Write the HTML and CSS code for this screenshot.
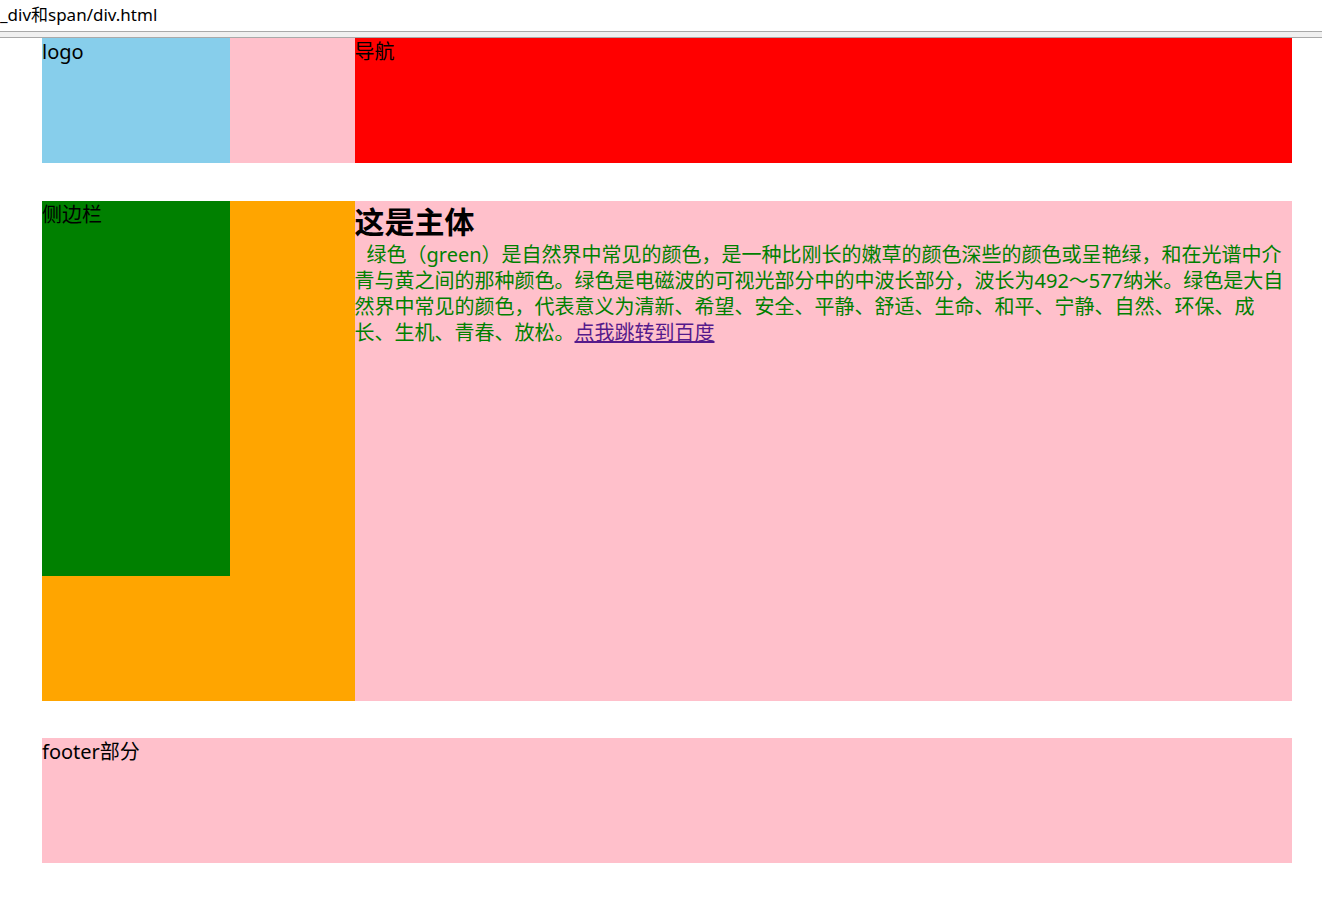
FILE: index.html
```html
<!DOCTYPE html>
<html lang="zh">
<head>
<meta charset="utf-8">
<title>div</title>
<link rel="stylesheet" href="styles.css">
</head>
<body>
<div class="addr">_div和span/div.html</div>
<div class="band"></div>
<div class="page">
  <div class="header">
    <div class="logo">logo</div>
    <div class="nav">导航</div>
  </div>
  <div class="main">
    <div class="aside">
      <div class="side-inner">侧边栏</div>
    </div>
    <div class="content">
      <h2 class="title">这是主体</h2>
      <p class="text">绿色（green）是自然界中常见的颜色，是一种比刚长的嫩草的颜色深些的颜色或呈艳绿，和在光谱中介青与黄之间的那种颜色。绿色是电磁波的可视光部分中的中波长部分，波长为492～577纳米。绿色是大自然界中常见的颜色，代表意义为清新、希望、安全、平静、舒适、生命、和平、宁静、自然、环保、成长、生机、青春、放松。<a class="link" href="#">点我跳转到百度</a></p>
    </div>
  </div>
  <div class="footer">footer部分</div>
</div>
</body>
</html>
```
FILE: styles.css
```css
html, body {
  margin: 0;
  padding: 0;
  background: #fff;
}
body {
  font-family: "Noto Sans", "Noto Sans CJK SC", sans-serif;
  font-size: 20px;
  line-height: 28px;
  color: #000;
}
.addr {
  height: 31px;
  font-size: 17px;
  line-height: 30px;
  color: #000;
  white-space: nowrap;
}
.band {
  height: 5px;
  background: #f0f0f0;
  border-top: 1px solid #a9a9a9;
  border-bottom: 1px solid #a9a9a9;
}
.page {
  width: 1250px;
  margin-left: 42px;
}
.header {
  height: 125px;
  background: pink;
  display: flex;
  justify-content: space-between;
}
.logo {
  width: 187.5px;
  background: skyblue;
}
.nav {
  width: 937.5px;
  background: red;
}
.main {
  margin-top: 38px;
  height: 500px;
  background: pink;
  display: flex;
}
.aside {
  width: 312.5px;
  flex: none;
  background: orange;
}
.side-inner {
  width: 187.5px;
  height: 375px;
  background: green;
}
.content {
  flex: 1;
}
.title {
  margin: 0;
  font-size: 30px;
  line-height: 41px;
  font-weight: bold;
}
.text {
  margin: 0;
  color: green;
  line-height: 26px;
  text-indent: 12px;
}
.link {
  color: #551a8b;
  text-decoration: underline;
}
.footer {
  margin-top: 37px;
  height: 125px;
  background: pink;
}
```
